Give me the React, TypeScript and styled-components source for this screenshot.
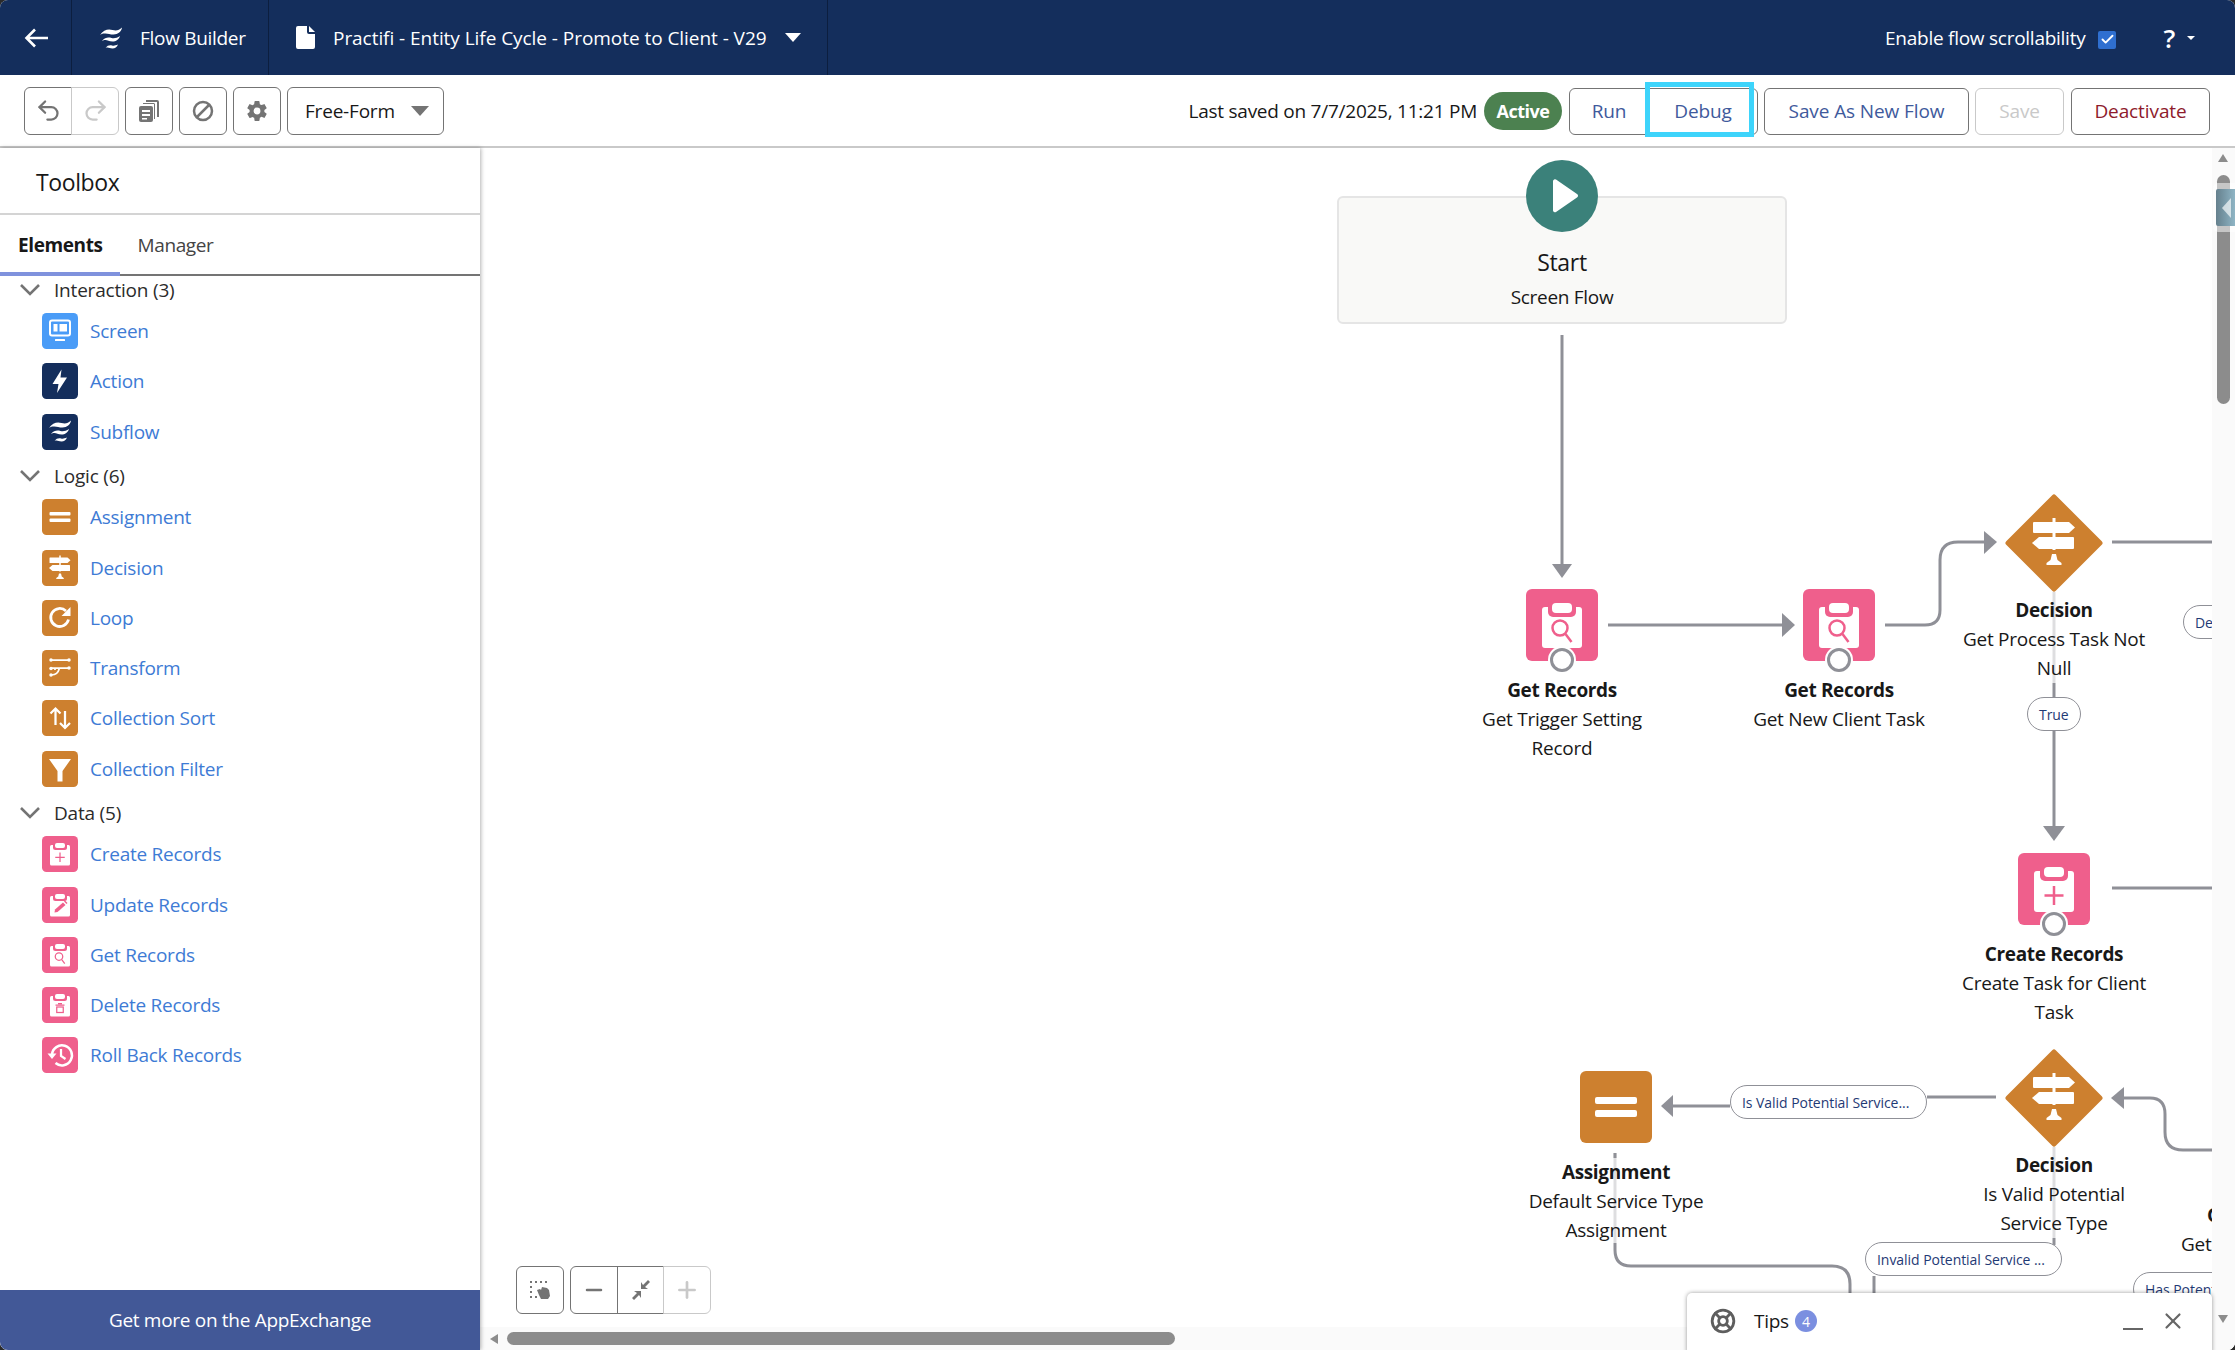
import React from 'react';
import styled, { createGlobalStyle } from 'styled-components';
import { FiCheck, FiX, FiPlus, FiMinus } from 'react-icons/fi';
import { LuUndo2, LuRedo2, LuLifeBuoy } from 'react-icons/lu';
import { IoSettingsSharp } from 'react-icons/io5';

const FONT = `'Open Sans', 'Noto Sans', sans-serif`;

const colors = {
  navy: '#142e5c',
  orange: '#cd802f',
  pink: '#ef5f8c',
  sky: '#4a9cf7',
  link: '#3e7bd5',
  ink: '#181818',
  line: '#8f9097',
  btn: '#3f5a9c',
};

const GlobalStyle = createGlobalStyle`
  html, body { margin: 0; padding: 0; background: #2b2b2b; }
  body { font-family: ${FONT}; color: ${colors.ink}; }
`;

const Page = styled.div`
  width: 2235px;
  height: 1350px;
  display: flex;
  flex-direction: column;
  overflow: hidden;
  background: #fff;
  border-radius: 8px;
`;

const Header = styled.header`
  height: 75px;
  flex: none;
  display: flex;
  align-items: stretch;
  background: ${colors.navy};
  color: #fff;
  font-size: 19px;
  letter-spacing: -0.3px;
`;

const HeaderCell = styled.div<{ $width: number; $pad: number }>`
  display: flex;
  align-items: center;
  width: ${({ $width }) => $width}px;
  box-sizing: border-box;
  border-right: 1px solid #0c1e3f;
  padding-left: ${({ $pad }) => $pad}px;
`;

const HeaderLabel = styled.span<{ $gap: number; $tight?: boolean }>`
  margin-left: ${({ $gap }) => $gap}px;
  letter-spacing: ${({ $tight }) => ($tight ? '-0.05px' : 'inherit')};
`;

const HeaderRight = styled.div`
  margin-left: auto;
  display: flex;
  align-items: center;
  padding-right: 40px;
  letter-spacing: -0.26px;
`;

const Check = styled.span`
  width: 18px;
  height: 18px;
  margin: 4px 0 0 13px;
  border-radius: 2px;
  background: #2f6fd0;
  display: flex;
  align-items: center;
  justify-content: center;
`;

const HelpMark = styled.span`
  font-size: 26px;
  margin-left: 47px;
  font-weight: 600;
`;

const Caret = styled.span<{ $size: number; $color: string; $gap?: number }>`
  display: inline-block;
  width: 0;
  height: 0;
  margin-left: ${({ $gap }) => $gap ?? 0}px;
  border-left: ${({ $size }) => $size}px solid transparent;
  border-right: ${({ $size }) => $size}px solid transparent;
  border-top: ${({ $size }) => $size * 1.2}px solid ${({ $color }) => $color};
`;

const Toolbar = styled.div`
  height: 73px;
  flex: none;
  box-sizing: border-box;
  display: flex;
  align-items: center;
  padding: 0 25px 0 24px;
  border-bottom: 2px solid #c9c9c9;
  font-size: 19px;
`;

const IconGroup = styled.div`
  display: flex;
  margin-right: 6px;
`;

const IconButton = styled.button<{ $disabled?: boolean; $w?: number }>`
  width: ${({ $w }) => $w ?? 48}px;
  height: 48px;
  padding: 0;
  background: #fff;
  display: flex;
  align-items: center;
  justify-content: center;
  border: 1px solid ${({ $disabled }) => ($disabled ? '#c9c9c9' : '#747474')};
  color: ${({ $disabled }) => ($disabled ? '#c9c9c9' : '#747474')};
  border-radius: 6px;
  & + & {
    margin-left: -1px;
  }
  ${IconGroup} > &:not(:first-child) { border-top-left-radius: 0; border-bottom-left-radius: 0; }
  ${IconGroup} > &:not(:last-child) { border-top-right-radius: 0; border-bottom-right-radius: 0; }
`;

const Select = styled.div`
  width: 157px;
  height: 48px;
  box-sizing: border-box;
  border: 1px solid #747474;
  border-radius: 6px;
  display: flex;
  align-items: center;
  justify-content: space-between;
  padding: 0 14px 0 17px;
  font-size: 19px;
  letter-spacing: -0.2px;
`;

const ToolbarRight = styled.div`
  margin-left: auto;
  display: flex;
  align-items: center;
`;

const Saved = styled.span`
  letter-spacing: -0.25px;
  margin-right: 7px;
`;

const ActivePill = styled.span`
  width: 78px;
  height: 38px;
  border-radius: 19px;
  background: #4c8150;
  color: #fff;
  font-weight: 700;
  font-size: 18px;
  letter-spacing: -0.5px;
  display: flex;
  align-items: center;
  justify-content: center;
  margin-right: 7px;
`;

const BtnGroup = styled.div<{ $after: number }>`
  display: flex;
  position: relative;
  margin-right: ${({ $after }) => $after}px;
`;

const Btn = styled.button<{ $w: number; $tone?: 'danger' | 'off'; $first?: boolean; $last?: boolean }>`
  width: ${({ $w }) => $w}px;
  height: 47px;
  margin-top: 1px;
  margin-left: ${({ $last }) => ($last ? -1 : 0)}px;
  box-sizing: border-box;
  background: #fff;
  font: 19px ${FONT};
  letter-spacing: -0.1px;
  padding: 0;
  border: 1px solid ${({ $tone }) => ($tone === 'off' ? '#c9c9c9' : '#747474')};
  border-radius: ${({ $first, $last }) =>
    $first ? '6px 0 0 6px' : $last ? '0 6px 6px 0' : '6px'};
  color: ${({ $tone }) =>
    $tone === 'danger' ? '#8e1b2c' : $tone === 'off' ? '#c9c9c9' : colors.btn};
`;

const FocusRing = styled.span`
  position: absolute;
  left: 76px;
  top: -5px;
  width: 109px;
  height: 55px;
  box-sizing: border-box;
  border: 5px solid #3dd4fb;
  pointer-events: none;
`;

const Body = styled.div`
  flex: 1;
  min-height: 0;
  display: flex;
`;

const Sidebar = styled.aside`
  width: 480px;
  flex: none;
  display: flex;
  flex-direction: column;
  background: #fff;
  box-shadow: 1px 0 4px rgba(0, 0, 0, 0.3);
  z-index: 2;
`;

const ToolboxTitle = styled.div`
  height: 67px;
  flex: none;
  box-sizing: border-box;
  display: flex;
  align-items: center;
  padding: 2px 0 0 36px;
  font-size: 23px;
  letter-spacing: -0.4px;
  border-bottom: 2px solid #d4d4d4;
`;

const Tabs = styled.div`
  height: 61px;
  flex: none;
  display: flex;
  box-sizing: border-box;
  border-bottom: 2px solid #747474;
`;

const Tab = styled.div<{ $active?: boolean }>`
  height: 61px;
  box-sizing: border-box;
  padding: 3px 17px 0 18px;
  display: flex;
  align-items: center;
  font-size: 19px;
  letter-spacing: -0.4px;
  font-weight: ${({ $active }) => ($active ? 700 : 400)};
  color: ${({ $active }) => ($active ? colors.ink : '#444')};
  border-bottom: 4px solid ${({ $active }) => ($active ? '#7f92dd' : 'transparent')};
`;

const ElementList = styled.div`
  flex: 1;
  min-height: 0;
  padding-left: 20px;
`;

const SectionHead = styled.div`
  height: 28px;
  display: flex;
  align-items: center;
  font-size: 19px;
  letter-spacing: -0.2px;
  color: #2b2b2b;
  gap: 14px;
  margin: 5.5px 0 2px;
  &:first-child {
    margin-top: 0;
  }
`;

const ElementRow = styled.div`
  height: 50.25px;
  display: flex;
  align-items: center;
  gap: 12px;
  margin-left: 22px;
  font-size: 19px;
  letter-spacing: -0.25px;
  color: ${colors.link};
`;

const Footer = styled.div`
  height: 60px;
  flex: none;
  background: #425897;
  color: #fff;
  font-size: 19px;
  letter-spacing: -0.3px;
  display: flex;
  align-items: center;
  justify-content: center;
`;

const Canvas = styled.main`
  flex: 1;
  position: relative;
  overflow: hidden;
  background: #fff;
`;

/* node places are relative to the canvas, whose origin is (480, 148) on the page */
const ox = 480;
const oy = 148;

const Wires = styled.svg`
  position: absolute;
  inset: 0;
  width: 100%;
  height: 100%;
`;

const StartCard = styled.div`
  position: absolute;
  left: ${1337 - ox}px;
  top: ${196 - oy}px;
  width: 450px;
  height: 128px;
  box-sizing: border-box;
  border: 2px solid #e5e5e5;
  border-radius: 6px;
  background: #f9f9f7;
  display: flex;
  flex-direction: column;
  align-items: center;
`;

const StartTitle = styled.div`
  font-size: 23px;
  line-height: 30px;
  margin-top: 49px;
  letter-spacing: -0.3px;
`;

const StartSub = styled.div`
  font-size: 19px;
  line-height: 26px;
  margin-top: 7px;
  letter-spacing: -0.3px;
`;

const StartDot = styled.svg`
  position: absolute;
  left: ${1526 - ox}px;
  top: ${160 - oy}px;
`;

const Node = styled.div<{ $x: number; $y: number }>`
  position: absolute;
  left: ${({ $x }) => $x - ox - 110}px;
  top: ${({ $y }) => $y - oy}px;
  width: 220px;
  display: flex;
  flex-direction: column;
  align-items: center;
`;

const NodeIcon = styled.div`
  height: 72px;
  width: 72px;
  position: relative;
`;

const NodeDiamond = styled.div`
  height: 98px;
  width: 98px;
`;

const Ring = styled.span`
  position: absolute;
  left: 24px;
  top: 59px;
  width: 24px;
  height: 24px;
  box-sizing: border-box;
  border-radius: 50%;
  border: 3px solid #8f9097;
  background: #fff;
  box-shadow: 0 0 0 2px #fff;
`;

const NodeText = styled.div<{ $top: number }>`
  margin-top: ${({ $top }) => $top}px;
  text-align: center;
  font-size: 19px;
  line-height: 29.5px;
  letter-spacing: -0.25px;
  white-space: pre-line;
`;

const NodeName = styled.div`
  font-weight: 700;
  letter-spacing: -0.35px;
  margin: 1px 0 -1px;
`;

const EdgePill = styled.div<{ $x: number; $y: number; $w: number }>`
  position: absolute;
  left: ${({ $x }) => $x - ox}px;
  top: ${({ $y }) => $y - oy}px;
  width: ${({ $w }) => $w}px;
  height: 34px;
  box-sizing: border-box;
  border: 1px solid #8f9097;
  border-radius: 17px;
  background: #fff;
  color: #1f3a75;
  font-size: 14px;
  letter-spacing: -0.05px;
  display: flex;
  align-items: center;
  padding-left: 11px;
  white-space: nowrap;
  overflow: hidden;
`;

const LooseText = styled.div<{ $x: number; $y: number; $bold?: boolean }>`
  position: absolute;
  left: ${({ $x }) => $x - ox}px;
  top: ${({ $y }) => $y - oy}px;
  font-size: 19px;
  line-height: 24px;
  letter-spacing: -0.2px;
  font-weight: ${({ $bold }) => ($bold ? 700 : 400)};
`;

const ZoomDock = styled.div`
  position: absolute;
  left: ${516 - ox}px;
  top: ${1266 - oy}px;
  display: flex;
  gap: 6px;
`;

const ScrollV = styled.div`
  position: absolute;
  right: 0;
  top: 0;
  bottom: 0;
  width: 23px;
  background: #fafafa;
  z-index: 1;
`;

const ScrollH = styled.div`
  position: absolute;
  left: 0;
  right: 0;
  bottom: 0;
  height: 23px;
  background: #fafafa;
`;

const ThumbV = styled.div`
  position: absolute;
  left: 5px;
  top: ${175 - oy}px;
  width: 13px;
  height: 229px;
  border-radius: 7px;
  background: #8c8c8c;
`;

const ThumbH = styled.div`
  position: absolute;
  left: ${507 - ox}px;
  top: 5px;
  width: 668px;
  height: 13px;
  border-radius: 7px;
  background: #8c8c8c;
`;

const Arrow = styled.span<{ $x: number; $y: number; $dir: 'up' | 'down' | 'left' }>`
  position: absolute;
  left: ${({ $x }) => $x}px;
  top: ${({ $y }) => $y}px;
  width: 0;
  height: 0;
  ${({ $dir }) =>
    $dir === 'left'
      ? 'border-top: 5px solid transparent; border-bottom: 5px solid transparent; border-right: 8px solid #8c8c8c;'
      : `border-left: 5.5px solid transparent; border-right: 5.5px solid transparent; border-${
          $dir === 'up' ? 'bottom' : 'top'
        }: 8px solid #8c8c8c;`}
`;

const PanelHandle = styled.div`
  position: absolute;
  left: ${2213 - ox}px;
  top: ${183 - oy}px;
  width: 22px;
  height: 49px;
  box-sizing: border-box;
  background: rgba(255, 255, 255, 0.5);
  border-radius: 5px 0 0 5px;
  padding: 6px 0 6px 3px;
  z-index: 2;
`;

const HandleFace = styled.div`
  width: 100%;
  height: 100%;
  background: linear-gradient(90deg, #65808d, #8fb5c5);
  border-radius: 2px 0 0 2px;
  display: flex;
  align-items: center;
  padding-left: 6px;
  box-sizing: border-box;
`;

const HandleArrow = styled.span`
  width: 0;
  height: 0;
  border-top: 10px solid transparent;
  border-bottom: 10px solid transparent;
  border-right: 9px solid rgba(255, 255, 255, 0.65);
`;

const TipsPanel = styled.div`
  position: absolute;
  left: ${1687 - ox}px;
  top: ${1293 - oy}px;
  width: 525px;
  height: 60px;
  box-sizing: border-box;
  background: #fff;
  border-radius: 5px 5px 0 0;
  box-shadow: 0 0 4px rgba(0, 0, 0, 0.4);
  display: flex;
  align-items: center;
  padding: 0 26px 4px 23px;
  z-index: 3;
  font-size: 19px;
  letter-spacing: -0.3px;
`;

const TipsLabel = styled.span`
  margin-left: 18px;
`;

const TipsBadge = styled.span`
  width: 22px;
  height: 22px;
  border-radius: 50%;
  background: #7b8fe0;
  color: #fff;
  font-size: 14px;
  display: flex;
  align-items: center;
  justify-content: center;
  margin-left: 6px;
`;

const TipsActions = styled.div`
  margin-left: auto;
  display: flex;
  align-items: center;
  gap: 17px;
  color: #666;
`;

const MinBar = styled.span`
  width: 20px;
  height: 2px;
  margin-top: 16px;
  background: #666;
`;

/* ---------- drawn glyphs, all on a 72 unit square ---------- */

const Waves = ({ fill }: { fill: string }) => (
  <g fill={fill}>
    <path d="M14 28C21 18 30 15 39 18c7 2 13 1 19-5-1 8-8 14-17 14-8 0-12-3-19-2-3 0-5 1-8 3z" />
    <path d="M18 40c6-7 12-8 19-6 6 1 11 0 17-4-2 7-8 11-15 11-7 0-10-3-14-3-3 0-5 1-7 2z" />
    <path d="M25 54c4-5 8-6 13-5 4 1 7 0 12-2-2 5-6 8-11 8-5 0-7-2-10-2-2 0-3 0-4 1z" />
  </g>
);

const Signpost = () => (
  <g fill="#fff">
    <rect x="34.5" y="11" width="3" height="32" />
    <path d="M16 15h35l6 5.500-6 5.500H16a1 1 0 0 1-1-1v-9a1 1 0 0 1 1-1z" />
    <path d="M21 30h34a1 1 0 0 1 1 1v10a1 1 0 0 1-1 1H21l-7-6z" />
    <path d="M34 47h4l1.500 6 4 3v2h-15v-2l4-3z" />
  </g>
);

const AssignBars = () => (
  <g fill="#fff">
    <rect x="15" y="26" width="42" height="7" rx="2" />
    <rect x="15" y="39" width="42" height="7" rx="2" />
  </g>
);

const Clipboard = ({ kind }: { kind: 'add' | 'edit' | 'find' | 'trash' }) => (
  <g>
    <rect x="16" y="18" width="40" height="41" rx="3" fill="#fff" />
    <rect x="22" y="12" width="28" height="16" rx="5" fill={colors.pink} />
    <rect x="26" y="14" width="20" height="10" rx="4" fill="#fff" />
    {kind === 'add' && (
      <path d="M36 33v19M26.500 42.500h19" stroke={colors.pink} strokeWidth="2.500" fill="none" />
    )}
    {kind === 'edit' && (
      <g fill={colors.pink}>
        <path d="M25 51l1-6 16-14 5 5-16 14z" />
        <path d="M44 29l2-2 5 5-2 2z" />
      </g>
    )}
    {kind === 'find' && (
      <g fill="none" stroke={colors.pink} strokeWidth="2.500">
        <circle cx="34" cy="39" r="7.500" />
        <path d="M39.500 45l6 8" />
      </g>
    )}
    {kind === 'trash' && (
      <g fill="none" stroke={colors.pink} strokeWidth="2.500">
        <path d="M27 36h18M32 33h8" />
        <rect x="29.500" y="40" width="13" height="11" />
      </g>
    )}
  </g>
);

type Kind =
  | 'screen' | 'action' | 'subflow' | 'assign' | 'decision' | 'loop' | 'transform'
  | 'sort' | 'filter' | 'create' | 'update' | 'get' | 'delete' | 'rollback';

const toneOf: Record<Kind, string> = {
  screen: colors.sky,
  action: colors.navy,
  subflow: colors.navy,
  assign: colors.orange,
  decision: colors.orange,
  loop: colors.orange,
  transform: colors.orange,
  sort: colors.orange,
  filter: colors.orange,
  create: colors.pink,
  update: colors.pink,
  get: colors.pink,
  delete: colors.pink,
  rollback: colors.pink,
};

const Glyph = ({ kind }: { kind: Kind }) => {
  switch (kind) {
    case 'screen':
      return (
        <g>
          <rect x="16" y="15" width="40" height="30" rx="4" fill="none" stroke="#fff" strokeWidth="4" />
          <rect x="23" y="22" width="8" height="15" fill="#fff" />
          <rect x="35" y="22" width="15" height="15" fill="#fff" />
          <rect x="26" y="52" width="20" height="4" rx="1" fill="#fff" />
        </g>
      );
    case 'action':
      return <path d="M39 13L21 42h12l-3 18 20-31H37z" fill="#fff" />;
    case 'subflow':
      return <Waves fill="#fff" />;
    case 'assign':
      return <AssignBars />;
    case 'decision':
      return <Signpost />;
    case 'loop':
      return (
        <g>
          <path d="M53 39a18 18 0 1 1-5-17" fill="none" stroke="#fff" strokeWidth="5.500" />
          <path d="M57 14v18H39z" fill="#fff" />
        </g>
      );
    case 'transform':
      return (
        <g stroke="#fff" strokeWidth="3.500" fill="none">
          <path d="M18 20h36M18 36h36M18 50c10-1 14-3 17-14M26 36v4" />
          <g fill="#fff" stroke="none">
            <circle cx="18" cy="20" r="3.500" />
            <circle cx="54" cy="20" r="3.500" />
            <circle cx="18" cy="37" r="3.500" />
            <circle cx="54" cy="36" r="3.500" />
            <circle cx="18" cy="50" r="3.500" />
          </g>
        </g>
      );
    case 'sort':
      return (
        <g stroke="#fff" strokeWidth="4.500" fill="none">
          <path d="M27 50V18M17 27l10-10 10 10" />
          <path d="M46 22v33M36 46l10 10 10-10" />
        </g>
      );
    case 'filter':
      return <path d="M14 16h44L41 40v21h-10V40z" fill="#fff" />;
    case 'create':
      return <Clipboard kind="add" />;
    case 'update':
      return <Clipboard kind="edit" />;
    case 'get':
      return <Clipboard kind="find" />;
    case 'delete':
      return <Clipboard kind="trash" />;
    case 'rollback':
      return (
        <g>
          <path d="M20 35a20 20 0 1 1 7 17" fill="none" stroke="#fff" strokeWidth="5" />
          <path d="M11 33h18l-9 11z" fill="#fff" />
          <path d="M38 24v14l9 6" fill="none" stroke="#fff" strokeWidth="4.500" />
        </g>
      );
  }
};

const Tile = styled.svg`
  flex: none;
  display: block;
`;

const ElementTile = ({ kind, size }: { kind: Kind; size: number }) => (
  <Tile width={size} height={size} viewBox="0 0 72 72">
    <rect width="72" height="72" rx={size > 40 ? 6 : 9} fill={toneOf[kind]} />
    <Glyph kind={kind} />
  </Tile>
);

const DiamondTile = () => (
  <svg width="98" height="98" viewBox="0 0 98 98">
    <path d="M49 3L95 49 49 95 3 49z" fill={colors.orange} stroke={colors.orange} strokeWidth="5" strokeLinejoin="round" />
    <g transform="translate(13 13)">
      <Signpost />
    </g>
  </svg>
);

const BackArrow = () => (
  <svg width="24" height="20" viewBox="0 0 24 20" fill="none" stroke="#fff" strokeWidth="2.6">
    <path d="M24 10H3M11 1.500L2.500 10l8.500 8.500" />
  </svg>
);

const FileGlyph = () => (
  <svg width="19" height="23" viewBox="0 0 19 23" fill="#fff">
    <path d="M2 0h9v6a2 2 0 0 0 2 2h6v13a2 2 0 0 1-2 2H2a2 2 0 0 1-2-2V2a2 2 0 0 1 2-2z" />
    <path d="M13 0l6 6h-6z" />
  </svg>
);

const CopyGlyph = () => (
  <svg width="20" height="22" viewBox="0 0 20 22" fill="#747474">
    <path d="M7 0h11a2 2 0 0 1 2 2v15h-2V2H7z" />
    <path d="M4 3h11a2 2 0 0 1 1 1v15h-1V4H4z" />
    <path d="M2 6h10a2 2 0 0 1 2 2v12a2 2 0 0 1-2 2H2a2 2 0 0 1-2-2V8a2 2 0 0 1 2-2z" />
    <path d="M3 10h8v2H3zM3 14h8v2H3zM3 18h5v1.500H3z" fill="#fff" />
  </svg>
);

const BanGlyph = () => (
  <svg width="22" height="22" viewBox="0 0 22 22" fill="none" stroke="#747474" strokeWidth="2.5">
    <circle cx="11" cy="11" r="9" />
    <path d="M17.500 4.500L4.500 17.500" />
  </svg>
);

const ChevronGlyph = () => (
  <svg width="20" height="12" viewBox="0 0 20 12" fill="none" stroke="#747474" strokeWidth="2.6">
    <path d="M1 1l9 9 9-9" />
  </svg>
);

const MarqueeHand = () => (
  <svg width="22" height="20" viewBox="0 0 22 20" fill="#747474">
    <path d="M1 1h2v2H1zM6 1h2v2H6zM11 1h2v2h-2zM16 1h2v2h-2zM1 6h2v2H1zM1 11h2v2H1zM1 16h2v2H1zM6 16h2v2H6z" />
    <path d="M8 10l3-1 1 1 1-3 5 1 2 2 1 6-2 3h-7l-2-4z" />
  </svg>
);

const FitIcon = () => (
  <svg width="20" height="20" viewBox="0 0 20 20" fill="#747474">
    <path d="M19 2l-5 5 3 2h-7V2l2 3 5-5zM1 18l5-5-3-2h7v7l-2-3-5 5z" />
  </svg>
);

const FlowLogo = () => (
  <svg width="26" height="30" viewBox="10 8 52 52">
    <Waves fill="#fff" />
  </svg>
);

const Section = ({ title, items }: { title: string; items: [Kind, string][] }) => (
  <>
    <SectionHead>
      <ChevronGlyph />
      {title}
    </SectionHead>
    {items.map(([kind, label]) => (
      <ElementRow key={label}>
        <ElementTile kind={kind} size={36} />
        {label}
      </ElementRow>
    ))}
  </>
);

const wire = { fill: 'none', stroke: colors.line, strokeWidth: 3 };
const faint = { fill: 'none', stroke: '#dedee0', strokeWidth: 3 };

const p = (x: number, y: number) => `${x - ox} ${y - oy}`;

export default function App() {
  return (
    <Page>
      <GlobalStyle />
      <Header>
        <HeaderCell $width={72} $pad={24}>
          <BackArrow />
        </HeaderCell>
        <HeaderCell $width={197} $pad={26}>
          <FlowLogo />
          <HeaderLabel $gap={16}>Flow Builder</HeaderLabel>
        </HeaderCell>
        <HeaderCell $width={559} $pad={27}>
          <FileGlyph />
          <HeaderLabel $gap={18} $tight>Practifi - Entity Life Cycle - Promote to Client - V29</HeaderLabel>
          <Caret $size={8} $color="#fff" $gap={18} />
        </HeaderCell>
        <HeaderRight>
          Enable flow scrollability
          <Check>
            <FiCheck size={15} color="#fff" strokeWidth={3} />
          </Check>
          <HelpMark>?</HelpMark>
          <Caret $size={4} $color="#fff" $gap={12} />
        </HeaderRight>
      </Header>

      <Toolbar>
        <IconGroup>
          <IconButton>
            <LuUndo2 size={27} />
          </IconButton>
          <IconButton $disabled>
            <LuRedo2 size={27} />
          </IconButton>
        </IconGroup>
        <IconGroup>
          <IconButton>
            <CopyGlyph />
          </IconButton>
        </IconGroup>
        <IconGroup>
          <IconButton>
            <BanGlyph />
          </IconButton>
        </IconGroup>
        <IconGroup>
          <IconButton>
            <IoSettingsSharp size={22} />
          </IconButton>
        </IconGroup>
        <Select>
          Free-Form
          <Caret $size={9} $color="#747474" />
        </Select>
        <ToolbarRight>
          <Saved>Last saved on 7/7/2025, 11:21 PM</Saved>
          <ActivePill>Active</ActivePill>
          <BtnGroup $after={6}>
            <Btn $w={80} $first>Run</Btn>
            <Btn $w={110} $last>Debug</Btn>
            <FocusRing />
          </BtnGroup>
          <BtnGroup $after={6}>
            <Btn $w={205}>Save As New Flow</Btn>
          </BtnGroup>
          <BtnGroup $after={7}>
            <Btn $w={89} $tone="off">Save</Btn>
          </BtnGroup>
          <Btn $w={139} $tone="danger">Deactivate</Btn>
        </ToolbarRight>
      </Toolbar>

      <Body>
        <Sidebar>
          <ToolboxTitle>Toolbox</ToolboxTitle>
          <Tabs>
            <Tab $active>Elements</Tab>
            <Tab>Manager</Tab>
          </Tabs>
          <ElementList>
            <Section
              title="Interaction (3)"
              items={[['screen', 'Screen'], ['action', 'Action'], ['subflow', 'Subflow']]}
            />
            <Section
              title="Logic (6)"
              items={[
                ['assign', 'Assignment'],
                ['decision', 'Decision'],
                ['loop', 'Loop'],
                ['transform', 'Transform'],
                ['sort', 'Collection Sort'],
                ['filter', 'Collection Filter'],
              ]}
            />
            <Section
              title="Data (5)"
              items={[
                ['create', 'Create Records'],
                ['update', 'Update Records'],
                ['get', 'Get Records'],
                ['delete', 'Delete Records'],
                ['rollback', 'Roll Back Records'],
              ]}
            />
          </ElementList>
          <Footer>Get more on the AppExchange</Footer>
        </Sidebar>

        <Canvas>
          <Wires>
            <g {...faint}>
              <path d={`M${p(2054, 592)} L${p(2054, 683)}`} />
              <path d={`M${p(1615, 1153)} L${p(1615, 1243)}`} />
              <path d={`M${p(2054, 1147)} L${p(2054, 1238)}`} />
            </g>
            <g {...wire}>
              <path d={`M${p(1562, 335)} L${p(1562, 566)}`} />
              <path d={`M${p(1608, 625)} L${p(1785, 625)}`} />
              <path d={`M${p(1885, 625)} L${p(1925, 625)} Q${p(1940, 625)} ${p(1940, 610)} L${p(1940, 560)} Q${p(1940, 542)} ${p(1958, 542)} L${p(1986, 542)}`} />
              <path d={`M${p(2112, 542)} L${p(2212, 542)}`} />
              <path d={`M${p(2054, 683)} L${p(2054, 828)}`} />
              <path d={`M${p(2112, 888)} L${p(2212, 888)}`} />
              <path d={`M${p(1730, 1106)} L${p(1670, 1106)}`} />
              <path d={`M${p(1927, 1097)} L${p(1996, 1097)}`} />
              <path d={`M${p(2120, 1098)} L${p(2150, 1098)} Q${p(2165, 1098)} ${p(2165, 1114)} L${p(2165, 1132)} Q${p(2165, 1150)} ${p(2183, 1150)} L${p(2212, 1150)}`} />
              <path d={`M${p(1615, 1243)} L${p(1615, 1250)} Q${p(1615, 1266)} ${p(1631, 1266)} L${p(1832, 1266)} Q${p(1850, 1266)} ${p(1850, 1284)} L${p(1850, 1300)}`} />
              <path d={`M${p(1874, 1276)} L${p(1874, 1300)}`} />
              <path d={`M${p(2054, 1238)} L${p(2054, 1245)}`} />
              <path d={`M${p(1615, 1153)} L${p(1615, 1158)}`} />
            </g>
            <g fill={colors.line}>
              <path d={`M${p(1552, 564)} L${p(1572, 564)} L${p(1562, 578)} Z`} />
              <path d={`M${p(1782, 613)} L${p(1795, 625)} L${p(1782, 637)} Z`} />
              <path d={`M${p(1984, 531)} L${p(1997, 542)} L${p(1984, 554)} Z`} />
              <path d={`M${p(2043, 826)} L${p(2065, 826)} L${p(2054, 841)} Z`} />
              <path d={`M${p(1661, 1106)} L${p(1673, 1095)} L${p(1673, 1117)} Z`} />
              <path d={`M${p(2111, 1098)} L${p(2124, 1087)} L${p(2124, 1109)} Z`} />
            </g>
          </Wires>

          <StartCard>
            <StartTitle>Start</StartTitle>
            <StartSub>Screen Flow</StartSub>
          </StartCard>
          <StartDot width="72" height="72" viewBox="0 0 72 72">
            <circle cx="36" cy="36" r="36" fill="#3b817a" />
            <path d="M27 21a2 2 0 0 1 3-1.500L51 34a2 2 0 0 1 0 3.500L30 52a2 2 0 0 1-3-1.500z" fill="#fff" />
          </StartDot>

          <Node $x={1562} $y={589}>
            <NodeIcon>
              <ElementTile kind="get" size={72} />
              <Ring />
            </NodeIcon>
            <NodeText $top={14}>
              <NodeName>Get Records</NodeName>
              {'Get Trigger Setting\nRecord'}
            </NodeText>
          </Node>
          <Node $x={1839} $y={589}>
            <NodeIcon>
              <ElementTile kind="get" size={72} />
              <Ring />
            </NodeIcon>
            <NodeText $top={14}>
              <NodeName>Get Records</NodeName>
              Get New Client Task
            </NodeText>
          </Node>
          <Node $x={2054} $y={494}>
            <NodeDiamond>
              <DiamondTile />
            </NodeDiamond>
            <NodeText $top={3}>
              <NodeName>Decision</NodeName>
              {'Get Process Task Not\nNull'}
            </NodeText>
          </Node>
          <EdgePill $x={2027} $y={697} $w={54}>True</EdgePill>
          <EdgePill $x={2183} $y={605} $w={60}>De</EdgePill>
          <Node $x={2054} $y={853}>
            <NodeIcon>
              <ElementTile kind="create" size={72} />
              <Ring />
            </NodeIcon>
            <NodeText $top={14}>
              <NodeName>Create Records</NodeName>
              {'Create Task for Client\nTask'}
            </NodeText>
          </Node>
          <Node $x={1616} $y={1071}>
            <NodeIcon>
              <ElementTile kind="assign" size={72} />
            </NodeIcon>
            <NodeText $top={14}>
              <NodeName>Assignment</NodeName>
              {'Default Service Type\nAssignment'}
            </NodeText>
          </Node>
          <Node $x={2054} $y={1049}>
            <NodeDiamond>
              <DiamondTile />
            </NodeDiamond>
            <NodeText $top={3}>
              <NodeName>Decision</NodeName>
              {'Is Valid Potential\nService Type'}
            </NodeText>
          </Node>
          <EdgePill $x={1730} $y={1085} $w={197}>Is Valid Potential Service...</EdgePill>
          <EdgePill $x={1865} $y={1242} $w={197}>Invalid Potential Service ...</EdgePill>
          <EdgePill $x={2133} $y={1272} $w={120}>Has Potential</EdgePill>
          <LooseText $x={2207} $y={1203} $bold>G</LooseText>
          <LooseText $x={2181} $y={1232}>Get</LooseText>

          <ZoomDock>
            <IconButton>
              <MarqueeHand />
            </IconButton>
            <IconGroup>
              <IconButton>
                <FiMinus size={24} strokeWidth={2.5} />
              </IconButton>
              <IconButton $w={47}>
                <FitIcon />
              </IconButton>
              <IconButton $disabled>
                <FiPlus size={26} strokeWidth={2.5} />
              </IconButton>
            </IconGroup>
          </ZoomDock>

          <ScrollH>
            <Arrow $x={10} $y={7} $dir="left" />
            <ThumbH />
          </ScrollH>
          <ScrollV>
            <Arrow $x={6} $y={6} $dir="up" />
            <ThumbV />
            <Arrow $x={6} $y={1167} $dir="down" />
          </ScrollV>
          <PanelHandle>
            <HandleFace>
              <HandleArrow />
            </HandleFace>
          </PanelHandle>

          <TipsPanel>
            <LuLifeBuoy size={26} color="#5e5e5e" strokeWidth={2.6} />
            <TipsLabel>Tips</TipsLabel>
            <TipsBadge>4</TipsBadge>
            <TipsActions>
              <MinBar />
              <FiX size={26} strokeWidth={2} />
            </TipsActions>
          </TipsPanel>
        </Canvas>
      </Body>
    </Page>
  );
}
